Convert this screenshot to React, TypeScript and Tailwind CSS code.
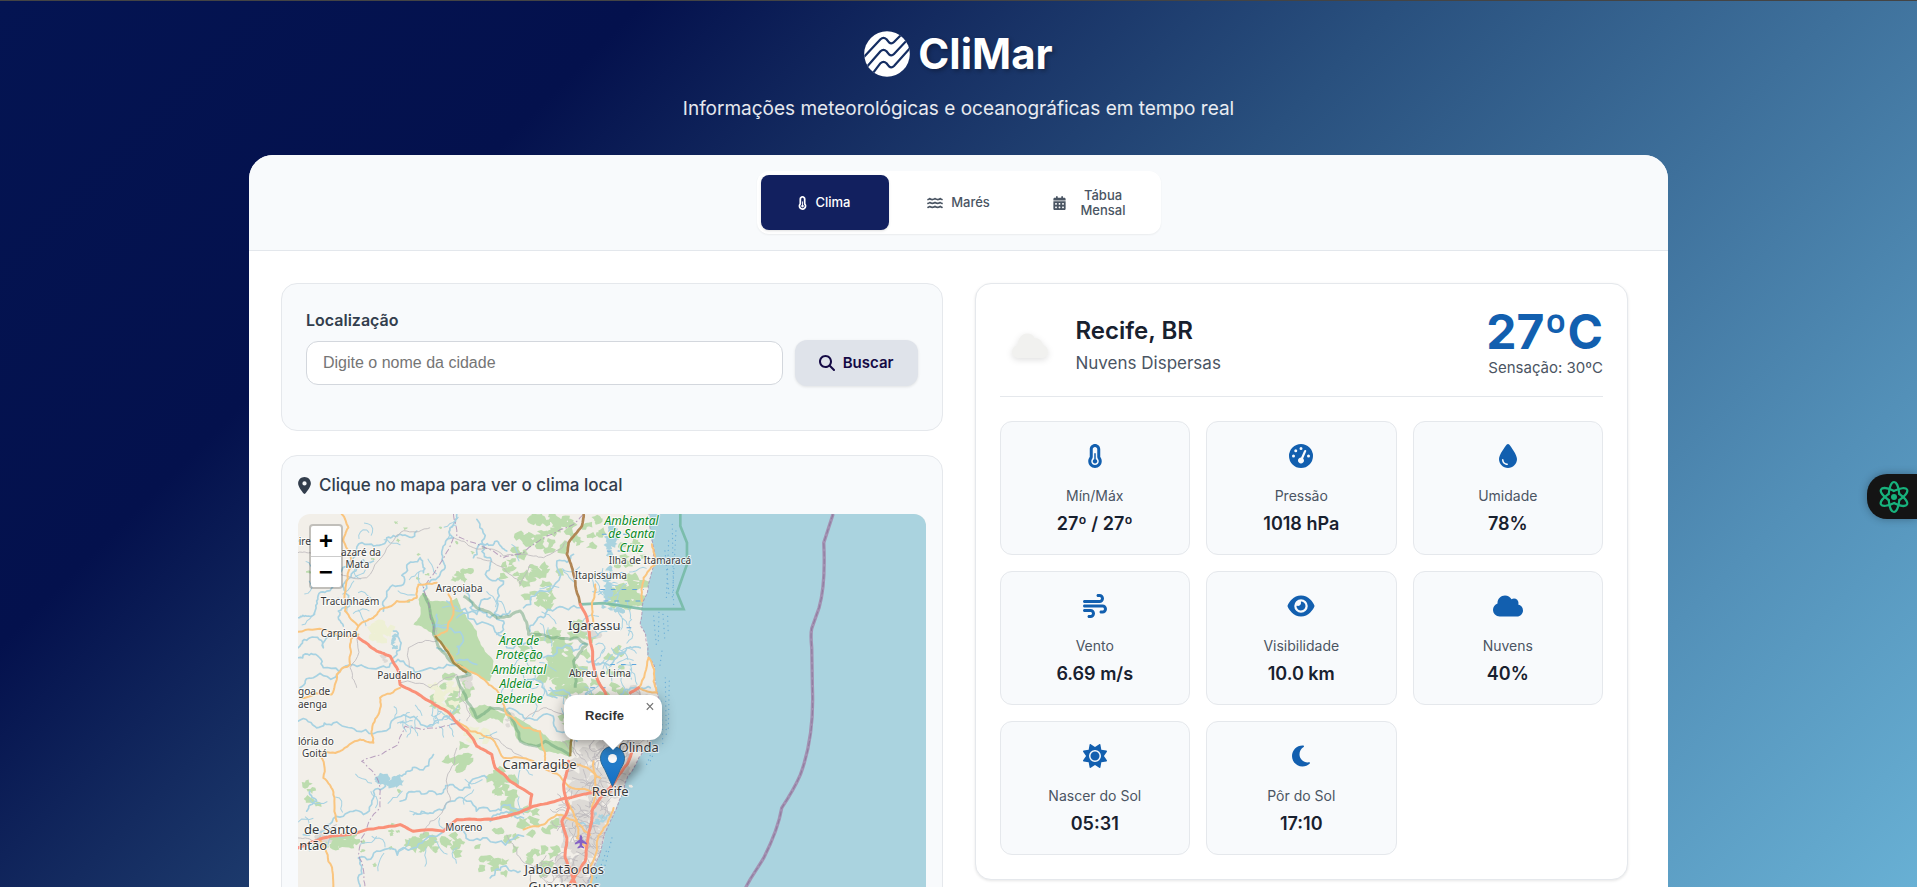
import type { ComponentType } from "react";
import {
  FaCalendarDays,
  FaCloud,
  FaDroplet,
  FaEye,
  FaGaugeHigh,
  FaLocationDot,
  FaMagnifyingGlass,
  FaMoon,
  FaSun,
  FaTemperatureHalf,
  FaWater,
  FaWind,
} from "react-icons/fa6";

type Icon = ComponentType<{ className?: string }>;
type Point = [number, number];

/* ---------- map geometry helpers ---------- */

function createRandom(seed: number) {
  let state = seed;
  return () => {
    state = (state * 1664525 + 1013904223) % 4294967296;
    return state / 4294967296;
  };
}

function parse(points: string): Point[] {
  return points.split(" ").map((pair) => pair.split(",").map(Number) as Point);
}

/* Subdivides a line and displaces the midpoints, giving it a natural course. */
function roughen(points: string, amount: number, seed = 7, close = false): string {
  const random = createRandom(seed);
  let line = parse(points);
  if (close) line.push(line[0]);
  for (let pass = 0; pass < 3; pass++) {
    const next: Point[] = [line[0]];
    for (let i = 1; i < line.length; i++) {
      const [ax, ay] = line[i - 1];
      const [bx, by] = line[i];
      const length = Math.hypot(bx - ax, by - ay);
      if (length > 8) {
        const shift = (random() - 0.5) * length * amount;
        next.push([(ax + bx) / 2 - ((by - ay) / length) * shift, (ay + by) / 2 + ((bx - ax) / length) * shift]);
      }
      next.push([bx, by]);
    }
    line = next;
  }
  return "M" + line.map(([x, y]) => `${x.toFixed(1)} ${y.toFixed(1)}`).join("L") + (close ? "Z" : "");
}

function patches(cx: number, cy: number, rx: number, ry: number, count: number, size: number, seed: number): string {
  const random = createRandom(seed);
  let d = "";
  for (let i = 0; i < count; i++) {
    const angle = random() * Math.PI * 2;
    const reach = Math.sqrt(random());
    const x = cx + Math.cos(angle) * reach * rx;
    const y = cy + Math.sin(angle) * reach * ry;
    const corners: string[] = [];
    for (let k = 0; k < 9; k++) {
      const turn = (k / 9) * Math.PI * 2;
      const radius = size * (0.35 + random() * 0.9);
      corners.push(`${(x + Math.cos(turn) * radius).toFixed(1)} ${(y + Math.sin(turn) * radius * 0.8).toFixed(1)}`);
    }
    d += "M" + corners.join("L") + "Z";
  }
  return d;
}

function streets(x0: number, y0: number, x1: number, y1: number, count: number, reach: number, seed: number): string {
  const random = createRandom(seed);
  let d = "";
  for (let i = 0; i < count; i++) {
    let x = x0 + random() * (x1 - x0);
    let y = y0 + random() * (y1 - y0);
    let heading = random() * Math.PI * 2;
    d += `M${x.toFixed(0)} ${y.toFixed(0)}`;
    for (let k = 0; k < 5; k++) {
      heading += (random() - 0.5) * 1.6;
      x += Math.cos(heading) * reach;
      y += Math.sin(heading) * reach;
      d += `L${x.toFixed(0)} ${y.toFixed(0)}`;
    }
  }
  return d;
}

const coast =
  "1075,20 1078,75 1093,150 1080,230 1072,270 1055,320 1050,370 1066,400 1072,465 1094,500 1100,570 1104,640 1084,710 1056,755 1030,800 1012,825 1000,870 986,900 960,960 936,1030 908,1100 890,1180 880,1330";

const rivers = [
  "24,350 55,345 80,300 110,270 150,215 190,170 235,130 290,110 330,100 380,90",
  "500,39 480,80 490,110 455,160 465,200 430,235 400,270",
  "160,375 145,330 175,290 160,250 200,200 250,180",
  "24,440 60,410 100,440 160,400",
  "24,470 70,460 100,500 190,490 280,495 340,480 420,500 470,490 530,520",
  "24,660 80,680 130,665 200,690 300,680 360,650 430,670 500,660",
  "40,1000 100,990 160,945 220,940 250,870 300,840 340,820 380,800 430,760",
  "210,1161 215,1100 205,1070 270,1050 370,1040 440,1005 520,990 590,1010 700,1005",
  "330,900 380,870 440,880 480,850 540,860 590,830",
  "370,940 420,935 470,905 530,900 600,930 660,910 710,930",
  "600,1130 640,1095 690,1110",
  "550,170 580,130 620,120 650,150",
  "560,55 575,120 600,170 590,210 640,240 620,300 640,360 620,400",
  "700,320 760,270 800,180 850,160",
  "720,390 760,350 800,320 870,320",
  "500,350 560,340 600,290",
  "470,300 560,370 650,440 760,470 850,450 890,430",
  "520,270 540,320 600,350 660,330",
  "440,440 480,470 560,490",
  "310,390 330,440 310,470",
  "30,560 70,530 150,510",
  "680,550 750,540 800,590",
  "640,620 700,650 760,640 800,690 860,720",
  "780,560 850,590 900,570",
  "890,480 930,490 980,470 1010,440 1050,440",
  "280,330 290,280 340,250 350,200 390,170 400,215",
  "440,340 430,380 520,420 500,460",
  "50,930 80,900 60,870",
  "600,960 640,935 700,950",
  "860,960 900,985 960,940",
  "980,590 1030,560 1080,560",
];

const minorRoads = [
  "24,155 60,155 140,210 230,230 300,130 350,90 420,80",
  "490,110 550,140 640,165 700,160 760,170 830,120",
  "360,500 355,440 440,420 440,380",
  "330,545 420,560 500,520 540,640 530,660",
  "560,170 640,200 690,250 720,190",
  "700,660 760,620 820,640",
  "600,700 650,740 700,770",
  "24,1010 80,1020 140,970",
  "400,1000 420,960 480,900 470,830 500,740",
  "650,1000 680,1060 740,1100 720,1161",
  "200,560 180,500 205,400",
];

const secondaryRoads = [
  "155,39 175,80 160,120 190,190 168,250 165,330 205,375 180,430 180,490 140,520 125,580 30,590",
  "205,375 250,350 270,325 320,300 380,290 385,250 440,245",
  "475,280 490,340 470,390 435,405",
  "24,392 110,388 205,400",
  "330,560 270,590 265,640 245,700 250,725 210,715 150,750 90,755 100,830 130,880 140,960",
  "90,1010 115,1080 130,1161",
  "500,660 540,690 600,710 640,770 730,780",
  "700,985 760,970 800,940 830,950 900,1000",
  "650,640 700,680 750,690 765,760 760,800 830,850 900,870",
  "440,410 500,490 560,520 610,560 650,640",
  "915,250 905,310 908,370",
  "1085,130 1095,190 1060,230 1055,300",
  "1075,470 1045,560 1100,575",
  "1075,470 1092,510 1098,570",
  "970,920 940,980 920,1030 900,1161",
  "830,900 860,960 860,1010 890,1040",
  "790,800 860,790 930,830",
  "910,780 915,860 905,920",
];

const mainRoads = [
  "205,410 260,450 300,465 325,510 330,550 400,590 470,630 530,690 560,735 605,760 615,800 660,840 725,880 720,915",
  "24,1040 100,1010 200,995 330,970 370,990 460,990 500,955 560,955 650,945 730,915 810,895 900,875 960,870",
  "870,310 890,350 905,440 920,530 960,600",
  "1045,560 1020,575",
  "1030,740 1010,790 975,840 930,890 905,930 895,1000 885,1080 830,1161",
  "835,780 820,850 835,920 815,960 830,1010 825,1070 860,1161",
];

const ocean = roughen("1075,20 " + coast + " 2400,1330 2400,20", 0.14, 5, true);

const smallLabels: [string, number, number][] = [
  ["azaré da", 213, 164],
  ["Mata", 202, 202],
  ["Tracunhaém", 180, 311],
  ["Carpina", 147, 407],
  ["Araçoiaba", 507, 273],
  ["Paudalho", 328, 534],
  ["Itapissuma", 932, 234],
  ["Ilha de Itamaracá", 1079, 190],
  ["Abreu e Lima", 929, 529],
  ["Moreno", 521, 990],
];

const townLabels: [string, number, number][] = [
  ["Igarassu", 912, 388],
  ["Camaragibe", 748, 802],
  ["Olinda", 1045, 751],
  ["Recife", 960, 883],
  ["Jaboatão dos", 822, 1119],
  ["Guararapes", 822, 1168],
];

const parkLabels: [string, number, number][] = [
  ["Ambiental", 1024, 71],
  ["de Santa", 1024, 112],
  ["Cruz", 1024, 152],
  ["Área de", 687, 432],
  ["Proteção", 687, 475],
  ["Ambiental", 687, 518],
  ["Aldeia -", 687, 561],
  ["Beberibe", 687, 605],
];

function RegionMap() {
  return (
    <svg
      viewBox="24 39 1881 1260"
      preserveAspectRatio="xMinYMin slice"
      className="block h-full w-full"
      role="img"
      aria-label="Mapa de Recife e região"
    >
      <rect x="24" y="39" width="2400" height="1400" fill="#f2efe9" />

      <g fill="#bcdcae">
        <path d={patches(770, 100, 90, 60, 30, 19, 3)} />
        <path d={patches(690, 200, 60, 60, 16, 15, 4)} />
        <path d={patches(760, 250, 60, 70, 18, 18, 5)} />
        <path d={patches(900, 90, 60, 50, 12, 15, 6)} />
        <path d={patches(1010, 270, 60, 50, 26, 20, 8)} />
        <path d={patches(1020, 170, 40, 60, 9, 15, 9)} />
        <path d={patches(800, 420, 110, 60, 24, 20, 10)} />
        <path d={patches(820, 530, 60, 60, 26, 24, 11)} />
        <path d={patches(950, 580, 80, 50, 16, 18, 12)} />
        <path d={patches(480, 580, 60, 60, 22, 16, 13)} />
        <path d={patches(520, 220, 40, 20, 7, 14, 14)} />
        <path d={patches(510, 770, 40, 40, 12, 18, 15)} />
        <path d={patches(640, 860, 50, 60, 18, 20, 16)} />
        <path d={patches(720, 960, 80, 40, 14, 18, 17)} />
        <path d={patches(430, 1020, 90, 28, 20, 17, 18)} />
        <path d={patches(150, 1020, 60, 22, 14, 16, 19)} />
        <path d={patches(620, 1060, 120, 70, 18, 15, 20)} />
        <path d={patches(760, 1070, 50, 60, 10, 17, 21)} />
        <path d={patches(60, 880, 40, 40, 6, 13, 22)} />
        <path d={patches(250, 1000, 200, 150, 12, 8, 23)} />
        <path d={patches(350, 200, 300, 150, 14, 7, 24)} />
        <path d={patches(880, 660, 70, 50, 10, 16, 25)} />
        <path d={patches(970, 470, 60, 60, 10, 13, 26)} />
        <path
          d={roughen(
            "400,275 420,300 480,300 500,290 530,350 560,390 580,440 610,480 600,540 560,520 530,515 490,490 460,440 430,400 370,370 390,345 385,295",
            0.2,
            3,
            true,
          )}
        />
        <path d={roughen("650,640 700,660 750,690 790,720 840,715 842,765 790,755 740,735 690,720", 0.3, 4, true)} />
        <path d={roughen("535,620 600,615 650,635 640,670 600,650 565,665", 0.3, 6, true)} />
      </g>
      <g fill="#eef0d5">
        <path d={patches(260, 395, 40, 30, 12, 20, 31)} />
        <path d={patches(470, 600, 70, 60, 12, 17, 32)} />
        <path d={patches(570, 690, 50, 25, 9, 20, 33)} />
      </g>
      <g fill="#dddad6">
        <path d={patches(930, 800, 90, 90, 50, 24, 41)} />
        <path d={patches(890, 960, 70, 110, 46, 24, 42)} />
        <path d={patches(860, 1090, 50, 70, 22, 24, 43)} />
        <path d={patches(1040, 650, 50, 90, 24, 22, 44)} />
        <path d={patches(905, 390, 22, 20, 6, 14, 45)} />
        <path d={patches(535, 535, 16, 22, 6, 14, 46)} />
        <path d={patches(655, 655, 12, 22, 5, 10, 47)} />
        <path d={patches(285, 470, 10, 12, 3, 10, 48)} />
        <path d={patches(90, 1010, 40, 22, 8, 14, 49)} />
      </g>

      <g fill="none" stroke="#a7d2e2" strokeWidth="5" strokeLinejoin="round" strokeLinecap="round">
        {rivers.map((line, i) => (
          <path key={line} d={roughen(line, 0.6, 50 + i)} />
        ))}
      </g>
      <g fill="none" stroke="#a7d2e2" strokeWidth="3">
        <path d={streets(40, 60, 560, 380, 22, 11, 91)} />
        <path d={streets(300, 640, 480, 680, 20, 8, 92)} />
        <path d={streets(560, 180, 900, 700, 32, 12, 93)} />
        <path d={streets(60, 780, 740, 1060, 24, 12, 94)} />
        <path d={streets(900, 200, 1040, 540, 30, 11, 95)} />
      </g>
      <g fill="#aad3df">
        <path d={patches(305, 838, 45, 14, 14, 15, 51)} />
        <path d={patches(960, 110, 16, 50, 14, 13, 52)} />
        <path d={patches(955, 260, 12, 60, 14, 12, 53)} />
        <path d={patches(312, 425, 10, 30, 8, 8, 54)} />
        <path d={patches(990, 320, 60, 12, 9, 10, 55)} />
        <path d={patches(925, 950, 20, 24, 7, 9, 56)} />
      </g>

      <g fill="none" stroke="#bdb9bd" strokeWidth="2.5">
        {minorRoads.map((line, i) => (
          <path key={line} d={roughen(line, 0.3, 130 + i)} />
        ))}
        <path d={streets(850, 730, 1010, 880, 46, 11, 61)} />
        <path d={streets(820, 880, 950, 1140, 60, 11, 62)} />
        <path d={streets(1010, 580, 1080, 740, 20, 9, 63)} />
        <path d={streets(740, 1080, 860, 1161, 20, 9, 64)} />
      </g>

      <path d={ocean} fill="#aad3df" />
      <g fill="#f2efe9">
        <path d={patches(1025, 850, 8, 6, 2, 6, 71)} />
      </g>
      <path d={roughen(coast, 0.14, 5)} fill="none" stroke="#a98fb0" strokeWidth="3" strokeDasharray="9 5" opacity="0.8" />
      <g stroke="#6fb0d8" strokeWidth="4" strokeLinecap="round" fill="none" strokeDasharray="0.1 14">
        <path d="M1135 120L1128 300M1146 70L1150 310M1124 150L1136 280M1157 90L1146 290" />
        <path d="M1090 345L1098 430M1106 334L1104 430M1118 340L1124 420M1132 346L1134 400" />
        <path d="M1115 450L1108 500M1125 530L1128 700M1137 540L1134 690M1112 600L1118 740M1085 750L1065 800M1098 740L1075 790" />
        <path d="M965 1010L935 1130M948 1050L915 1140" />
      </g>
      <g stroke="#5fa6dd" strokeWidth="3" fill="none" strokeDasharray="14 18">
        <path d="M935 100H1030M950 150H1020M925 215H1000M930 265H1060M940 300H1050M945 380H1040M960 490H1050M900 560H960" />
      </g>

      <g fill="none" stroke="#5f9d73" strokeWidth="9" opacity="0.45" strokeLinejoin="round">
        <path d={roughen("400,275 420,330 430,400 480,480 540,520 500,530 530,600 560,650 600,620 650,630 690,720 740,735 765,720 840,765", 0.15, 9)} />
        <path d={roughen("520,285 560,320 620,350 660,345 690,330 715,400 780,410 860,410 890,430 850,480 855,560", 0.2, 10)} />
      </g>
      <path
        d="M1170 39V75L1190 125V190L1160 275L1180 324H1060L940 306L870 310"
        fill="none"
        stroke="#73b8a3"
        strokeWidth="8"
        opacity="0.85"
      />
      <g fill="none" stroke="#a585b0" strokeWidth="3" strokeDasharray="18 7 5 7" opacity="0.75">
        <path d={roughen("490,39 500,105 640,170 700,155 850,70 880,39", 0.12, 11)} />
        <path d={roughen("490,110 455,180 400,260 420,350 435,400", 0.12, 12)} />
        <path d={roughen("500,665 400,685 345,675 325,730 215,780 265,840 270,920 215,1010 205,1060 225,1161", 0.15, 13)} />
      </g>

      <g fill="none" stroke="#fac57f" strokeWidth="6" strokeLinejoin="round" strokeLinecap="round">
        {secondaryRoads.map((line, i) => (
          <path key={line} d={roughen(line, 0.22, 170 + i)} />
        ))}
      </g>
      <path d={roughen("880,39 875,75 835,125 830,160 850,220 870,310", 0.12, 14)} fill="none" stroke="#b18655" strokeWidth="8" />
      <path d={roughen("435,405 490,485 530,515", 0.12, 15)} fill="none" stroke="#a08a4a" strokeWidth="7" />
      <path d={roughen("840,765 845,710", 0.12, 15)} fill="none" stroke="#a08a4a" strokeWidth="7" />
      <g fill="none" stroke="#fa9078" strokeWidth="9" strokeLinejoin="round" strokeLinecap="round">
        {mainRoads.map((line, i) => (
          <path key={line} d={roughen(line, 0.1, 210 + i)} />
        ))}
      </g>

      <g fill="none" strokeLinejoin="round">
        <path
          d="M1628 39L1600 125Q1606 250 1586 320L1564 382Q1560 400 1564 440L1566 560C1570 660 1560 740 1530 820Q1512 862 1474 920C1464 980 1440 1030 1420 1070C1400 1105 1385 1120 1365 1161L1300 1290"
          stroke="#a392b3"
          strokeWidth="10"
        />
        <path
          d="M1628 39L1600 125Q1606 250 1586 320L1564 382Q1560 400 1564 440L1566 560C1570 660 1560 740 1530 820Q1512 862 1474 920C1464 980 1440 1030 1420 1070C1400 1105 1385 1120 1365 1161L1300 1290"
          stroke="#8f7c9f"
          strokeWidth="3"
          strokeDasharray="16 7"
        />
      </g>
      <path
        d="M872 1001q4 0 4 8v6l14 10v5l-14-5v8l6 5v4l-10-3l-10 3v-4l6-5v-8l-14 5v-5l14-10v-6q0-8 4-8Z"
        fill="#8461c4"
      />

      <g
        fontFamily="Noto Sans, sans-serif"
        textAnchor="middle"
        fill="#3a3a3a"
        stroke="#ffffff"
        strokeOpacity="0.75"
        strokeWidth="6"
        strokeLinejoin="round"
        paintOrder="stroke"
      >
        <g fontSize="30">
          {smallLabels.map(([text, x, y]) => (
            <text key={text} x={x} y={y}>
              {text}
            </text>
          ))}
          <g textAnchor="start">
            <text x="26" y="131">ire</text>
            <text x="24" y="583">goa de</text>
            <text x="24" y="620">aenga</text>
            <text x="24" y="730">lória do</text>
            <text x="36" y="768">Goitá</text>
          </g>
        </g>
        <g fontSize="39">
          {townLabels.map(([text, x, y]) => (
            <text key={text} x={x} y={y}>
              {text}
            </text>
          ))}
        </g>
        <g fontSize="39" textAnchor="start">
          <text x="42" y="997">de Santo</text>
          <text x="28" y="1047">ntão</text>
        </g>
        <g fontSize="36" fontStyle="italic" fill="#0a8a1f">
          {parkLabels.map(([text, x, y]) => (
            <text key={`${text}${y}`} x={x} y={y}>
              {text}
            </text>
          ))}
        </g>
      </g>
    </svg>
  );
}

function MarkerPin() {
  return (
    <svg viewBox="0 0 25 41" className="block h-[41px] w-[25px]" aria-hidden="true">
      <defs>
        <linearGradient id="pin" x1="0" y1="0" x2="0" y2="1">
          <stop offset="0" stopColor="#2e85cb" />
          <stop offset="1" stopColor="#126fc6" />
        </linearGradient>
      </defs>
      <path
        d="M12.5 0.5C5.7 0.5 0.5 5.8 0.5 12.3C0.5 16.6 2.5 19.6 4.6 23.2L12.5 40.5L20.4 23.2C22.5 19.6 24.5 16.6 24.5 12.3C24.5 5.8 19.3 0.5 12.5 0.5Z"
        fill="url(#pin)"
        stroke="#2e6c97"
      />
      <circle cx="12.5" cy="12.5" r="4.5" fill="#ffffff" />
    </svg>
  );
}

function Logo() {
  return (
    <svg viewBox="0 0 46 46" className="size-[46px]" aria-hidden="true">
      <defs>
        <clipPath id="disc">
          <circle cx="23" cy="23" r="22.8" />
        </clipPath>
      </defs>
      <circle cx="23" cy="23" r="22.8" fill="#ffffff" />
      <g clipPath="url(#disc)" fill="none" stroke="#142d62" strokeWidth="2.2" strokeLinejoin="round">
        <path d="M-1 27L16.5 8.2Q19.5 5.4 22.5 8.2L25 11.4Q27.5 13.6 30 11L40 1" />
        <path d="M1 38L16.5 20.2Q19.5 17.4 22.5 20.2L25 23.4Q27.5 25.6 30 23L46 6" />
        <path d="M6 46L16.5 32.2Q19.5 29.4 22.5 32.2L25 35.4Q27.5 37.6 30 35L48 15" />
      </g>
    </svg>
  );
}

function AtomIcon() {
  return (
    <svg viewBox="0 0 32 34" className="h-[34px] w-8" fill="none" aria-hidden="true">
      <g stroke="#17b27c" strokeWidth="2.2" strokeLinecap="round">
        {[0, 60, 120].map((angle) => (
          <ellipse
            key={angle}
            cx="16"
            cy="17"
            rx="5.4"
            ry="15"
            transform={`rotate(${angle} 16 17)`}
            pathLength="100"
            strokeDasharray="41 9"
            strokeDashoffset="-4"
          />
        ))}
      </g>
      <circle cx="16" cy="17" r="3" fill="#17b27c" />
    </svg>
  );
}

const tabs: { label: string; icon: Icon; iconWidth: string; active?: boolean }[] = [
  { label: "Clima", icon: FaTemperatureHalf, iconWidth: "w-[9px] shrink-0", active: true },
  { label: "Marés", icon: FaWater, iconWidth: "w-4 shrink-0" },
  { label: "Tábua Mensal", icon: FaCalendarDays, iconWidth: "w-[13px] shrink-0" },
];

const readings: { label: string; value: string; icon: Icon }[] = [
  { label: "Mín/Máx", value: "27º / 27º", icon: FaTemperatureHalf },
  { label: "Pressão", value: "1018 hPa", icon: FaGaugeHigh },
  { label: "Umidade", value: "78%", icon: FaDroplet },
  { label: "Vento", value: "6.69 m/s", icon: FaWind },
  { label: "Visibilidade", value: "10.0 km", icon: FaEye },
  { label: "Nuvens", value: "40%", icon: FaCloud },
  { label: "Nascer do Sol", value: "05:31", icon: FaSun },
  { label: "Pôr do Sol", value: "17:10", icon: FaMoon },
];

function Header() {
  return (
    <header className="flex flex-col items-center pt-[30px] pb-8 text-white">
      <h1 className="flex items-center gap-2 text-[42px] leading-[46px] font-bold [text-shadow:2px_2px_4px_rgba(0,0,0,0.3)]">
        <Logo />
        CliMar
      </h1>
      <p className="mt-[18px] text-[19px] leading-7 text-white/90">
        Informações meteorológicas e oceanográficas em tempo real
      </p>
    </header>
  );
}

function TabBar() {
  return (
    <nav className="flex justify-center border-b border-[#e3e7ec] bg-[#f8fafc] py-4">
      <div className="grid w-[404px] grid-cols-3 gap-1.5 rounded-xl bg-white p-1 shadow-[0_1px_2px_rgba(0,0,0,0.06)]">
        {tabs.map(({ label, icon: TabIcon, iconWidth, active }) => (
          <button
            key={label}
            type="button"
            className={
              active
                ? "flex h-[55px] items-center justify-center gap-2 rounded-lg bg-[#12205f] px-6 text-[13px] leading-[15px] font-medium text-white shadow-sm"
                : "flex h-[55px] items-center justify-center gap-2 rounded-lg px-6 text-[13px] leading-[15px] font-medium text-[#4a5563]"
            }
          >
            <span className={iconWidth}>
              <TabIcon className="h-[14px] w-full" />
            </span>
            <span>{label}</span>
          </button>
        ))}
      </div>
    </nav>
  );
}

function SearchCard() {
  return (
    <form
      className="rounded-2xl border border-[#e5e8ec] bg-[#f8fafc] p-6"
      onSubmit={(event) => event.preventDefault()}
    >
      <label htmlFor="city" className="block text-base leading-6 font-semibold text-[#333e4d]">
        Localização
      </label>
      <div className="mt-2 mb-5 flex items-center gap-3">
        <input
          id="city"
          type="text"
          placeholder="Digite o nome da cidade"
          className="h-11 min-w-0 flex-1 rounded-xl border border-[#d3d7dd] bg-white px-4 font-['Liberation_Sans',sans-serif] text-base text-gray-800 placeholder:text-[#757575]"
        />
        <button
          type="submit"
          className="flex h-[46px] items-center gap-2 rounded-xl bg-[#dfe3ea] px-6 text-[15px] font-semibold text-[#150a45] shadow-[0_1px_3px_rgba(0,0,0,0.1)]"
        >
          <FaMagnifyingGlass className="size-4" />
          Buscar
        </button>
      </div>
    </form>
  );
}

function MapCard() {
  return (
    <section className="rounded-2xl border border-[#e5e8ec] bg-[#f8fafc] p-4">
      <h2 className="mb-4 flex items-center gap-2 text-[17px] leading-[26px] font-medium text-[#333e4d]">
        <FaLocationDot className="h-[17px] w-[13px]" />
        Clique no mapa para ver o clima local
      </h2>
      <div className="relative h-[420px] overflow-hidden rounded-xl">
        <RegionMap />
        <div className="absolute top-[10px] left-[11px] flex w-[34px] flex-col overflow-hidden rounded-[4px] border-2 border-black/20 bg-white bg-clip-padding font-['Liberation_Mono',monospace] text-[24px] font-bold text-black">
          <button type="button" aria-label="Aproximar" className="h-[31px] border-b border-[#cccccc] leading-[33px]">
            +
          </button>
          <button type="button" aria-label="Afastar" className="h-[30px] leading-[33px]">
            −
          </button>
        </div>
        <div className="absolute top-[232px] left-[302px]">
          <div className="absolute top-5 left-3 h-3 w-8 -rotate-45 rounded-full bg-black/35 blur-[4px]" />
          <div className="relative">
            <MarkerPin />
          </div>
        </div>
        <div className="absolute top-[181px] left-[266px] flex flex-col items-center drop-shadow-[0_3px_7px_rgba(0,0,0,0.4)]">
          <div className="relative flex h-[45px] w-[98px] items-center rounded-xl bg-white pb-[3px] pl-[21px] font-['Liberation_Sans',sans-serif] text-[13px] font-bold text-[#333333]">
            Recife
            <button
              type="button"
              aria-label="Fechar"
              className="absolute top-0 right-0 size-6 text-base leading-6 font-normal text-[#757575]"
            >
              ×
            </button>
          </div>
          <svg viewBox="0 0 20 10" className="h-[10px] w-5" aria-hidden="true">
            <path d="M0 0H20L10 10Z" fill="#ffffff" />
          </svg>
        </div>
      </div>
    </section>
  );
}

function WeatherCard() {
  return (
    <section className="rounded-2xl border border-[#e5e8ec] bg-white p-6 shadow-[0_1px_3px_rgba(0,0,0,0.1)]">
      <div className="flex items-center justify-between border-b border-[#e5e8ec] pb-4">
        <div className="flex items-center gap-3">
          <svg viewBox="0 0 64 64" className="size-16 drop-shadow-[0_2px_3px_rgba(0,0,0,0.12)]" aria-hidden="true">
            <path
              d="M19 46C15 46 12 43.500 12 40C12 36.500 14.500 34 17.500 33C18 27 21.500 21.500 27 21.500C31 21.500 33.500 23.500 34.500 26C39 26 42.500 29 43 33C46 34 48 36.500 48 40C48 43.500 45.500 46 41.500 46Z"
              fill="#f1f1ef"
            />
          </svg>
          <div className="pt-0.5">
            <h2 className="text-2xl leading-9 font-semibold text-[#18212f]">Recife, BR</h2>
            <p className="text-[17px] leading-7 text-[#4b5563]">Nuvens Dispersas</p>
          </div>
        </div>
        <div className="flex flex-col items-end text-[#4b5563]">
          <strong className="text-5xl leading-[48px] font-bold text-[#125faf]">27ºC</strong>
          <span className="text-[15px] leading-6">Sensação: 30ºC</span>
        </div>
      </div>
      <dl className="mt-6 grid grid-cols-3 gap-4">
        {readings.map(({ label, value, icon: ReadingIcon }) => (
          <div
            key={label}
            className="flex flex-col items-center rounded-xl border border-[#e5e8ec] bg-[#f8fafc] p-4"
          >
            <div className="flex h-9 items-center text-[#125faf]">
              <ReadingIcon className="h-6 w-[30px]" />
            </div>
            <dt className="mt-3 text-sm leading-5 text-[#4b5563]">{label}</dt>
            <dd className="mt-1 text-lg leading-7 font-semibold text-[#18212f]">{value}</dd>
          </div>
        ))}
      </dl>
    </section>
  );
}

export default function App() {
  return (
    <div className="h-screen overflow-y-auto border-t border-[#444444] bg-[linear-gradient(135deg,#041452_0%,#04114d_23%,#142b60_34%,#29507e_50%,#5390b8_82%,#68b0d4_100%)] font-[Inter,sans-serif] [scrollbar-width:none]">
      <Header />
      <main className="mx-auto max-w-[1419px] overflow-hidden rounded-t-3xl bg-white">
        <TabBar />
        <div className="grid grid-cols-2 gap-8 p-8">
          <div className="flex min-w-0 flex-col gap-6">
            <SearchCard />
            <MapCard />
          </div>
          <div className="min-w-0 pr-2">
            <WeatherCard />
          </div>
        </div>
      </main>
      <button
        type="button"
        aria-label="Abrir assistente"
        className="fixed top-[474px] right-0 flex h-[45px] w-[50px] items-center rounded-l-[20px] bg-[#141414] pl-[11px] shadow-[0_0_8px_rgba(0,0,0,0.3)]"
      >
        <AtomIcon />
      </button>
    </div>
  );
}
